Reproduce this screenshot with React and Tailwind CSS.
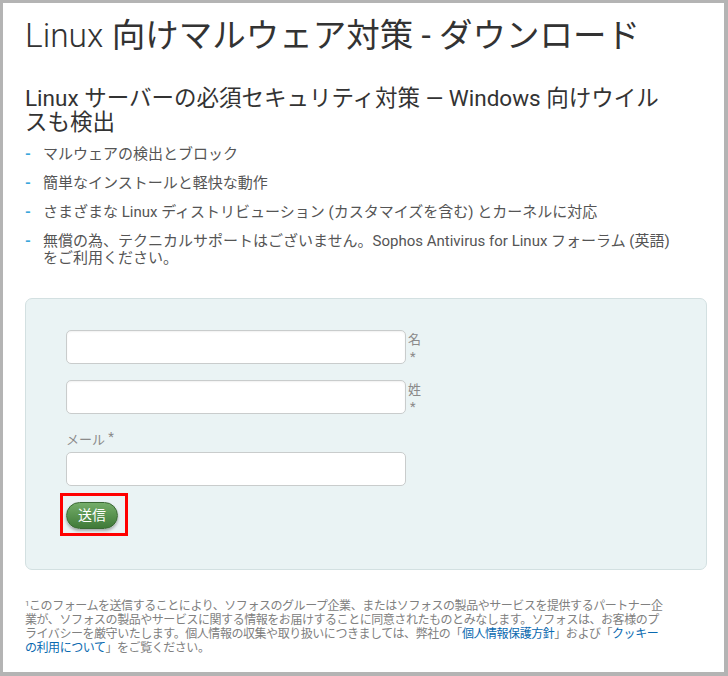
import React from 'react';

const features = [
  ['マルウェアの検出とブロック'],
  ['簡単なインストールと軽快な動作'],
  ['さまざまな Linux ディストリビューション (カスタマイズを含む) とカーネルに対応'],
  ['無償の為、テクニカルサポートはございません。Sophos Antivirus for Linux フォーラム (英語)', 'をご利用ください。'],
];

function Field({ label }) {
  return (
    <div className="flex items-start h-[34px]">
      <input className="w-[340px] h-[34px] bg-white border border-[#c9cccc] rounded-[5px] shadow-[inset_0_1px_2px_rgba(0,0,0,0.06)]" />
      <div className="ml-[2px] pt-[1px] text-[13px] leading-[17px] text-[#8a8a8a]">
        <div>{label}</div>
        <div className="pl-[2px]">*</div>
      </div>
    </div>
  );
}

export default function App() {
  return (
    <div className="w-[728px] h-[676px] bg-white border-t-[3px] border-l-[3px] border-r-4 border-b-4 border-[#b4b4b4] font-['Roboto','Noto_Sans_CJK_JP',sans-serif] overflow-hidden">
      <div className="pl-[22px] pr-[17px] pt-[12px]">
        {/* タイトル */}
        <h1 className="text-[33.5px] leading-[42px] text-[#333] whitespace-nowrap">
          <span className="font-light">Linux</span> 向けマルウェア対策 - ダウンロード
        </h1>

        <h2 className="mt-[29px] text-[22.5px] leading-[24px] text-[#333] whitespace-nowrap">
          Linux サーバーの必須セキュリティ対策 — Windows 向けウイル
          <br />
          スも検出
        </h2>

        {/* 特長 */}
        <ul className="mt-[12px] space-y-[12px] text-[15px] leading-[17px] text-[#555]">
          {features.map((lines, i) => (
            <li key={i} className="flex">
              <span className="w-[18px] shrink-0 text-[#3aa7db] font-bold">-</span>
              <span className="whitespace-nowrap">
                {lines[0]}
                {lines[1] && (
                  <>
                    <br />
                    {lines[1]}
                  </>
                )}
              </span>
            </li>
          ))}
        </ul>

        {/* フォーム */}
        <div className="mt-[31px] bg-[#eaf3f4] border border-[#d3e0e1] rounded-[7px] pl-[40px] pt-[31px] pb-[33px]">
          <Field label="名" />
          <div className="mt-[16px]">
            <Field label="姓" />
          </div>
          <div className="mt-[17px] text-[13px] leading-[17px] text-[#8a8a8a]">
            メール <span className="relative top-[-3px] text-[#888]">*</span>
          </div>
          <input className="mt-[4px] w-[340px] h-[34px] bg-white border border-[#c9cccc] rounded-[5px] block" />
          <div className="mt-[7px] ml-[-6px] inline-block border-[3px] border-[#ff0000] pl-[3px] pr-[7px] pt-[6px] pb-[4px]">
            <button className="block w-[52px] h-[27px] rounded-full bg-gradient-to-b from-[#74ad69] to-[#3f7a38] border border-[#3b6934] text-white text-[14px] leading-[25px] shadow-[0_2px_3px_rgba(0,0,0,0.3)]">
              送信
            </button>
          </div>
        </div>

        {/* 注記 */}
        <p className="mt-[29px] text-[12px] leading-[14px] text-[#808080] whitespace-nowrap tracking-[-0.45px]">
          <sup className="text-[8px]">1</sup>このフォームを送信することにより、ソフォスのグループ企業、またはソフォスの製品やサービスを提供するパートナー企
          <br />
          業が、ソフォスの製品やサービスに関する情報をお届けすることに同意されたものとみなします。ソフォスは、お客様のプ
          <br />
          ライバシーを厳守いたします。個人情報の収集や取り扱いにつきましては、弊社の「<a className="text-[#0a6ab0]">個人情報保護方針</a>」および「<a className="text-[#0a6ab0]">クッキー</a>
          <br />
          <a className="text-[#0a6ab0]">の利用について</a>」をご覧ください。
        </p>
      </div>
    </div>
  );
}
